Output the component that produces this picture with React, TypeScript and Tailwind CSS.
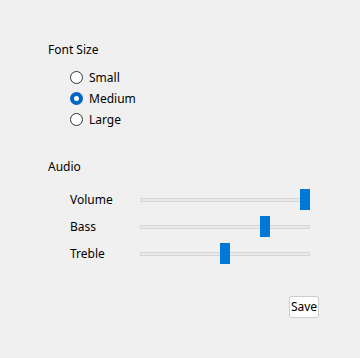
import { useState } from 'react';

const font = { fontFamily: '"Noto Sans", "Open Sans", sans-serif' };

const sizes = ['Small', 'Medium', 'Large'];

const sliders = [
  { label: 'Volume', value: 100 },
  { label: 'Bass', value: 75 },
  { label: 'Treble', value: 50 },
];

function Radio({ checked }: { checked: boolean }) {
  if (checked) {
    return (
      <span className="flex h-[13px] w-[13px] items-center justify-center rounded-full bg-[#0067c0]">
        <span className="h-[5px] w-[5px] rounded-full bg-white" />
      </span>
    );
  }
  return <span className="h-[13px] w-[13px] rounded-full border border-[#333333] bg-white" />;
}

function Slider({ value }: { value: number }) {
  return (
    <div className="relative h-[21px] w-[170px]">
      <div className="absolute left-0 right-0 top-[9px] h-[4px] border border-[#d6d6d6] bg-[#e7eaea]" />
      <div
        className="absolute top-0 h-[21px] w-[10px] bg-[#0078d7]"
        style={{ left: `${(value / 100) * 160}px` }}
      />
    </div>
  );
}

export default function App() {
  const [size, setSize] = useState('Medium');

  return (
    <div
      className="flex h-[358px] w-[360px] flex-col bg-[#f0f0f0] pl-[48px] pr-[41px] pt-[42px] text-[12px] text-black"
      style={font}
    >
      <p className="h-[16px] leading-[16px]">Font Size</p>
      <div className="ml-[22px] mt-[9px] flex flex-col">
        {sizes.map((s) => (
          <button
            key={s}
            type="button"
            onClick={() => setSize(s)}
            className="flex h-[21px] items-center gap-[6px] text-left"
          >
            <Radio checked={size === s} />
            <span>{s}</span>
          </button>
        ))}
      </div>

      <p className="mt-[29px] h-[16px] leading-[16px]">Audio</p>
      <div className="ml-[22px] mt-[11px] flex flex-col">
        {sliders.map((s) => (
          <div key={s.label} className="flex h-[27px] items-center">
            <span className="w-[70px]">{s.label}</span>
            <Slider value={s.value} />
          </div>
        ))}
      </div>

      <div className="mt-[29px] flex justify-end">
        <button
          type="button"
          className="h-[22px] w-[30px] rounded-[3px] border border-[#cccccc] bg-white text-[12px] leading-none"
        >
          Save
        </button>
      </div>
    </div>
  );
}
